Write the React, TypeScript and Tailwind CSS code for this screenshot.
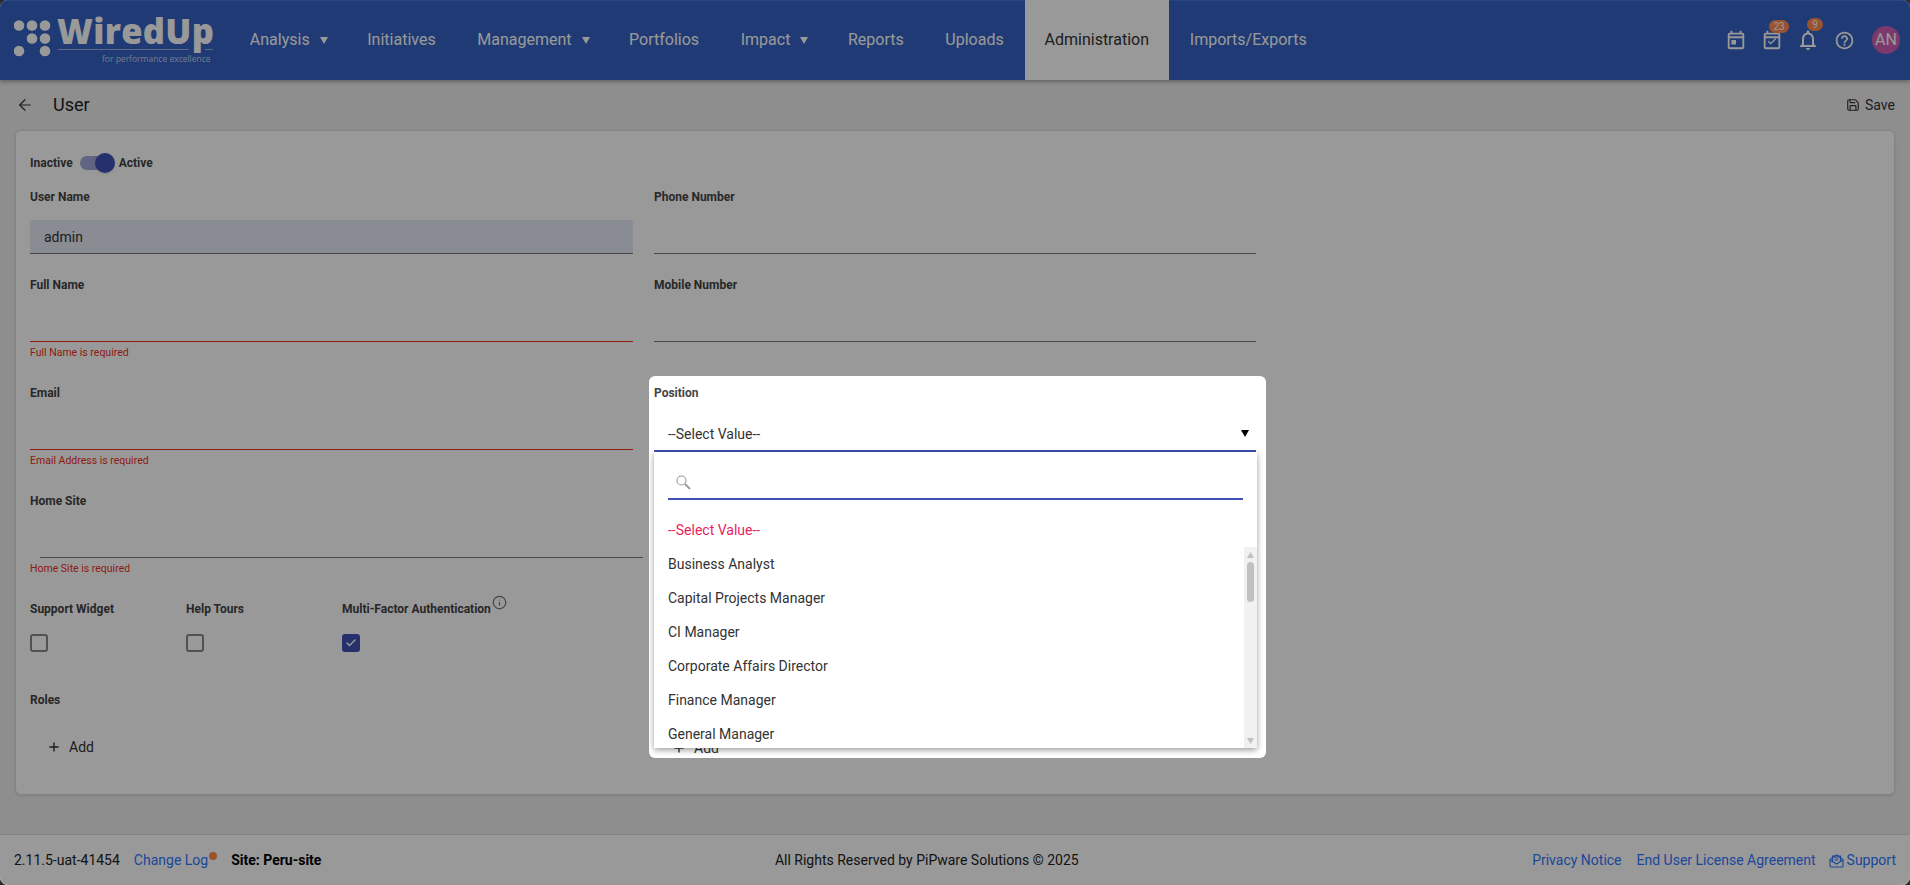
import { ArrowLeft, Save, Plus, Info, Check } from 'lucide-react';

const navItems = [
  { name: 'Analysis', caret: true },
  { name: 'Initiatives' },
  { name: 'Management', caret: true },
  { name: 'Portfolios' },
  { name: 'Impact', caret: true },
  { name: 'Reports' },
  { name: 'Uploads' },
  { name: 'Administration', active: true },
  { name: 'Imports/Exports' },
];

const options = [
  'Business Analyst',
  'Capital Projects Manager',
  'CI Manager',
  'Corporate Affairs Director',
  'Finance Manager',
  'General Manager',
  'HR Manager',
];

function Caret() {
  return (
    <svg width="8" height="7" viewBox="0 0 8 7" className="fill-current">
      <path d="M0 0h8L4 7z" />
    </svg>
  );
}

function Logo() {
  const dots = [
    [5, 5.5], [18, 5.5], [31, 5.5],
    [18, 18.5], [31, 18.5],
    [5, 31], [31, 31],
  ];
  return (
    <div className="relative w-[216px] h-[80px] shrink-0">
      <svg width="37" height="37" viewBox="0 0 37 37" className="absolute left-[14px] top-[20px]">
        {dots.map(([cx, cy]) => (
          <circle key={`${cx}-${cy}`} cx={cx} cy={cy} r="5.3" fill="#ffffff" />
        ))}
      </svg>
      <div className="absolute left-[57px] top-[9px] text-[34.5px] leading-[44px] font-['Open_Sans',sans-serif] font-extrabold tracking-[0.3px] text-white">
        WiredUp
      </div>
      <div className="absolute left-[58px] top-[49px] w-[131px] h-px bg-white/50" />
      <div className="absolute left-[205px] top-[49px] w-[8px] h-px bg-white/50" />
      <div className="absolute left-[102px] top-[53px] text-[8.5px] leading-[12px] font-['Open_Sans',sans-serif] text-white/70">
        for performance excellence
      </div>
    </div>
  );
}

function Nav() {
  return (
    <nav className="flex h-full ml-[13px]">
      {navItems.map((item) => (
        <div
          key={item.name}
          className={
            item.active
              ? 'flex items-center px-5 bg-white text-[#333] text-base'
              : 'flex items-center px-[20.8px] text-white text-base'
          }
        >
          {item.name}
          {item.caret && (
            <span className="ml-[10px] -mr-[2px]">
              <Caret />
            </span>
          )}
        </div>
      ))}
    </nav>
  );
}

function Header() {
  return (
    <header className="h-[80px] bg-[#3462c3] flex items-center shrink-0 shadow-[inset_0_1px_0_#4473d6,0_2px_4px_rgba(0,0,0,0.3)] relative">
      <Logo />
      <Nav />
      <div className="ml-auto flex items-center text-white pr-[10px]">
        <div className="w-[36px] flex justify-center">
          <svg width="22" height="22" viewBox="0 0 24 24" className="fill-current">
            <path d="M19 4h-1V2h-2v2H8V2H6v2H5c-1.11 0-1.99.9-1.99 2L3 20c0 1.1.89 2 2 2h14c1.1 0 2-.9 2-2V6c0-1.1-.9-2-2-2zm0 16H5V10h14v10zM5 8V6h14v2H5zm2 4h5v5H7v-5z" />
          </svg>
        </div>
        <div className="w-[36px] flex justify-center relative">
          <svg width="22" height="22" viewBox="0 0 24 24" className="fill-current">
            <path d="M19 4h-1V2h-2v2H8V2H6v2H5c-1.11 0-1.99.9-1.99 2L3 20c0 1.1.89 2 2 2h14c1.1 0 2-.9 2-2V6c0-1.1-.9-2-2-2zm0 16H5V10h14v10zM5 8V6h14v2H5zm11.53 3.06L15.47 10l-4.88 4.88-2.12-2.12-1.06 1.06L10.59 17z" />
          </svg>
          <span className="absolute -top-[9px] left-[15px] h-[13px] w-[20px] text-center rounded-full bg-[#ff8a50] text-[10px] leading-[13px]">23</span>
        </div>
        <div className="w-[36px] flex justify-center relative">
          <svg width="24" height="24" viewBox="0 0 24 24" className="fill-current">
            <path d="M12 22c1.1 0 2-.9 2-2h-4c0 1.1.9 2 2 2zm6-6v-5c0-3.07-1.63-5.64-4.5-6.32V4c0-.83-.67-1.5-1.5-1.5s-1.5.67-1.5 1.5v.68C7.64 5.36 6 7.92 6 11v5l-2 2v1h16v-1l-2-2zm-2 1H8v-6c0-2.48 1.51-4.5 4-4.5s4 2.02 4 4.5v6z" />
          </svg>
          <span className="absolute -top-[10px] left-[17px] h-[13px] w-[16px] text-center rounded-full bg-[#ff8a50] text-[10px] leading-[13px]">9</span>
        </div>
        <div className="w-[36px] flex justify-center">
          <svg width="21" height="21" viewBox="0 0 24 24" className="fill-current">
            <path d="M11 18h2v-2h-2v2zm1-16C6.48 2 2 6.48 2 12s4.48 10 10 10 10-4.48 10-10S17.52 2 12 2zm0 18c-4.41 0-8-3.59-8-8s3.59-8 8-8 8 3.59 8 8-3.59 8-8 8zm0-14c-2.21 0-4 1.79-4 4h2c0-1.1.9-2 2-2s2 .9 2 2c0 2-3 1.75-3 5h2c0-2.25 3-2.5 3-5 0-2.21-1.79-4-4-4z" />
          </svg>
        </div>
        <div className="ml-[10px] w-[28px] h-[28px] rounded-full bg-[#d05fb5] flex items-center justify-center text-base">AN</div>
      </div>
    </header>
  );
}

function Label({ children }: { children: React.ReactNode }) {
  return <div className="text-xs font-bold text-[#444] leading-[14px]">{children}</div>;
}

function Field({
  label,
  value,
  error,
  filled,
  inset,
  tail,
}: {
  label: string;
  value?: string;
  error?: string;
  filled?: boolean;
  inset?: boolean;
  tail: string;
}) {
  return (
    <div>
      <Label>{label}</Label>
      <div
        className={`mt-[16px] h-[34px] flex items-center px-[14px] text-sm text-[#333] border-b ${
          error && !inset ? 'border-[#ee3016]' : 'border-[#777]'
        } ${filled ? 'bg-[#e4e9f3] rounded-t-[3px]' : ''} ${inset ? 'ml-[10px] -mr-[10px]' : ''}`}
      >
        {value}
      </div>
      <div className={`${tail} ${error ? 'pt-[5px] text-[10.5px] leading-[12px] text-[#ee3016]' : ''}`}>{error}</div>
    </div>
  );
}

function CheckField({ label, checked, info, width }: { label: string; checked?: boolean; info?: boolean; width: string }) {
  return (
    <div className={width}>
      <div className="flex items-start h-[16px]">
        <Label>{label}</Label>
        {info && <Info size={15} className="-mt-[7px] ml-px text-[#777]" />}
      </div>
      <div
        className={
          checked
            ? 'mt-[16px] w-[18px] h-[18px] rounded-[3px] bg-[#3f51b5] flex items-center justify-center'
            : 'mt-[16px] w-[18px] h-[18px] rounded-[3px] border-2 border-[#888]'
        }
      >
        {checked && <Check size={12} strokeWidth={3} className="text-white" />}
      </div>
    </div>
  );
}

function PositionSelect() {
  return (
    <div className="absolute -left-[5px] -top-[10px] w-[617px] h-[382px] bg-white rounded-[6px] z-20 overflow-hidden pl-[5px] pt-[10px]">
      <Label>Position</Label>
      <div className="mt-[14px] h-[38px] w-[602px] flex items-center justify-between pl-[14px] pr-[7px] pt-[3px] text-sm text-[#333] border-b-2 border-[#3f51b5]">
        --Select Value--
        <span className="text-black">
          <Caret />
        </span>
      </div>
      {/* the Roles > Add button that sits under the open list */}
      <div className="absolute left-[23px] top-[362px] flex items-center gap-[8px] text-sm text-[#333]">
        <Plus size={14} strokeWidth={2.4} />
        Add
      </div>
      <div className="absolute left-[5px] top-[76px] w-[603px] h-[296px] bg-white shadow-[0_2px_6px_rgba(0,0,0,0.4)]">
        <div className="ml-[14px] mr-[14px] h-[48px] border-b-2 border-[#3f51b5] flex items-center pl-[8px] pt-[15px]">
          <svg width="15" height="15" viewBox="0 0 15 15" fill="none" stroke="#999">
            <circle cx="5.5" cy="5.5" r="4.5" strokeWidth="1.1" />
            <path d="M9 9l5 5" strokeWidth="1.8" />
          </svg>
        </div>
        <div className="mt-[13px] h-[34px] flex items-center px-[14px] text-sm text-[#e91e63]">--Select Value--</div>
        <div className="h-[201px] overflow-hidden relative">
          {options.map((o) => (
            <div key={o} className="h-[34px] flex items-center px-[14px] text-sm text-[#333]">{o}</div>
          ))}
          <div className="absolute right-0 top-0 bottom-0 w-[13px] bg-[#f1f1f1]">
            <div className="absolute left-[3px] top-[15px] w-[7px] h-[40px] rounded-full bg-[#c1c1c1]" />
            <svg width="7" height="6" viewBox="0 0 7 6" className="absolute left-[3px] top-[5px] fill-[#c1c1c1]">
              <path d="M3.5 0L7 6H0z" />
            </svg>
            <svg width="7" height="6" viewBox="0 0 7 6" className="absolute left-[3px] bottom-[4px] fill-[#c1c1c1]">
              <path d="M0 0h7L3.5 6z" />
            </svg>
          </div>
        </div>
      </div>
    </div>
  );
}

function UserForm() {
  return (
    <div className="mx-[15px] bg-white rounded-[6px] border border-[#ddd] h-[665px] px-[14px] pt-[17px] shadow-sm">
      <div className="flex items-center h-[30px] text-xs font-bold text-[#444]">
        Inactive
        <div className="relative w-[30px] h-[14px] ml-[7px] mr-[9px] rounded-full bg-[#9fa8da]">
          <div className="absolute -right-[5px] -top-[3px] w-[20px] h-[20px] rounded-full bg-[#3f51b5] shadow" />
        </div>
        Active
      </div>
      <div className="grid grid-cols-[603px_602px] gap-x-[21px] mt-[12px]">
        <div>
          <Field label="User Name" value="admin" filled tail="h-[24px]" />
          <Field label="Full Name" error="Full Name is required" tail="h-[44px]" />
          <Field label="Email" error="Email Address is required" tail="h-[44px]" />
          <Field label="Home Site" error="Home Site is required" inset tail="h-[44px]" />
        </div>
        <div>
          <Field label="Phone Number" tail="h-[24px]" />
          <Field label="Mobile Number" tail="h-[44px]" />
          <div className="relative">
            <PositionSelect />
          </div>
        </div>
      </div>
      <div className="flex">
        <CheckField label="Support Widget" width="w-[156px]" />
        <CheckField label="Help Tours" width="w-[156px]" />
        <CheckField label="Multi-Factor Authentication" checked info width="w-[300px]" />
      </div>
      <div className="mt-[41px]">
        <Label>Roles</Label>
      </div>
      <div className="flex items-center gap-[8px] mt-[30px] ml-[17px] text-sm text-[#333]">
        <Plus size={14} strokeWidth={2.4} />
        Add
      </div>
    </div>
  );
}

export default function App() {
  return (
    <div className="font-['Roboto',sans-serif] w-[1910px] h-[885px] bg-[#2a2a2a] overflow-hidden">
      <div className="relative w-full h-full rounded-[8px] overflow-hidden bg-[#ededed] flex flex-col">
        <Header />
        <main className="flex-1 min-h-0">
          <div className="h-[50px] flex items-center pl-[16px] pr-[15px]">
            <ArrowLeft size={18} strokeWidth={1.6} className="text-[#333]" />
            <span className="ml-[19px] text-lg text-[#222]">User</span>
            <div className="ml-auto flex items-center gap-[5px] text-sm text-[#333]">
              <Save size={14} />
              Save
            </div>
          </div>
          <UserForm />
        </main>
        <footer className="h-[51px] shrink-0 bg-white border-t border-[#ddd] flex items-center justify-between px-[14px] text-sm text-[#222]">
          <div className="flex items-center">
            <span>2.11.5-uat-41454</span>
            <span className="ml-[14px] text-[#2f78ff]">Change Log</span>
            <span className="ml-px w-[8px] h-[8px] rounded-full bg-[#ff8a50] -mt-[8px]" />
            <span className="ml-[14px] font-bold text-black">Site: Peru-site</span>
          </div>
          <span>All Rights Reserved by PiPware Solutions © 2025</span>
          <div className="flex items-center text-[#2f78ff]">
            <span>Privacy Notice</span>
            <span className="ml-[15px]">End User License Agreement</span>
            <svg width="15" height="15" viewBox="0 0 15 15" fill="none" stroke="currentColor" strokeWidth="1.1" className="ml-[13px] mr-[3px]">
              <path d="M1 6.5L7.5 2 14 6.5V13a1 1 0 0 1-1 1H2a1 1 0 0 1-1-1z" />
              <path d="M1 7l6.5 4L14 7" />
              <path d="M3.5 8V3h8v5M5.5 5h4M5.5 7h4" />
            </svg>
            <span>Support</span>
          </div>
        </footer>
        <div className="absolute inset-0 bg-black/40 z-10" />
      </div>
    </div>
  );
}
